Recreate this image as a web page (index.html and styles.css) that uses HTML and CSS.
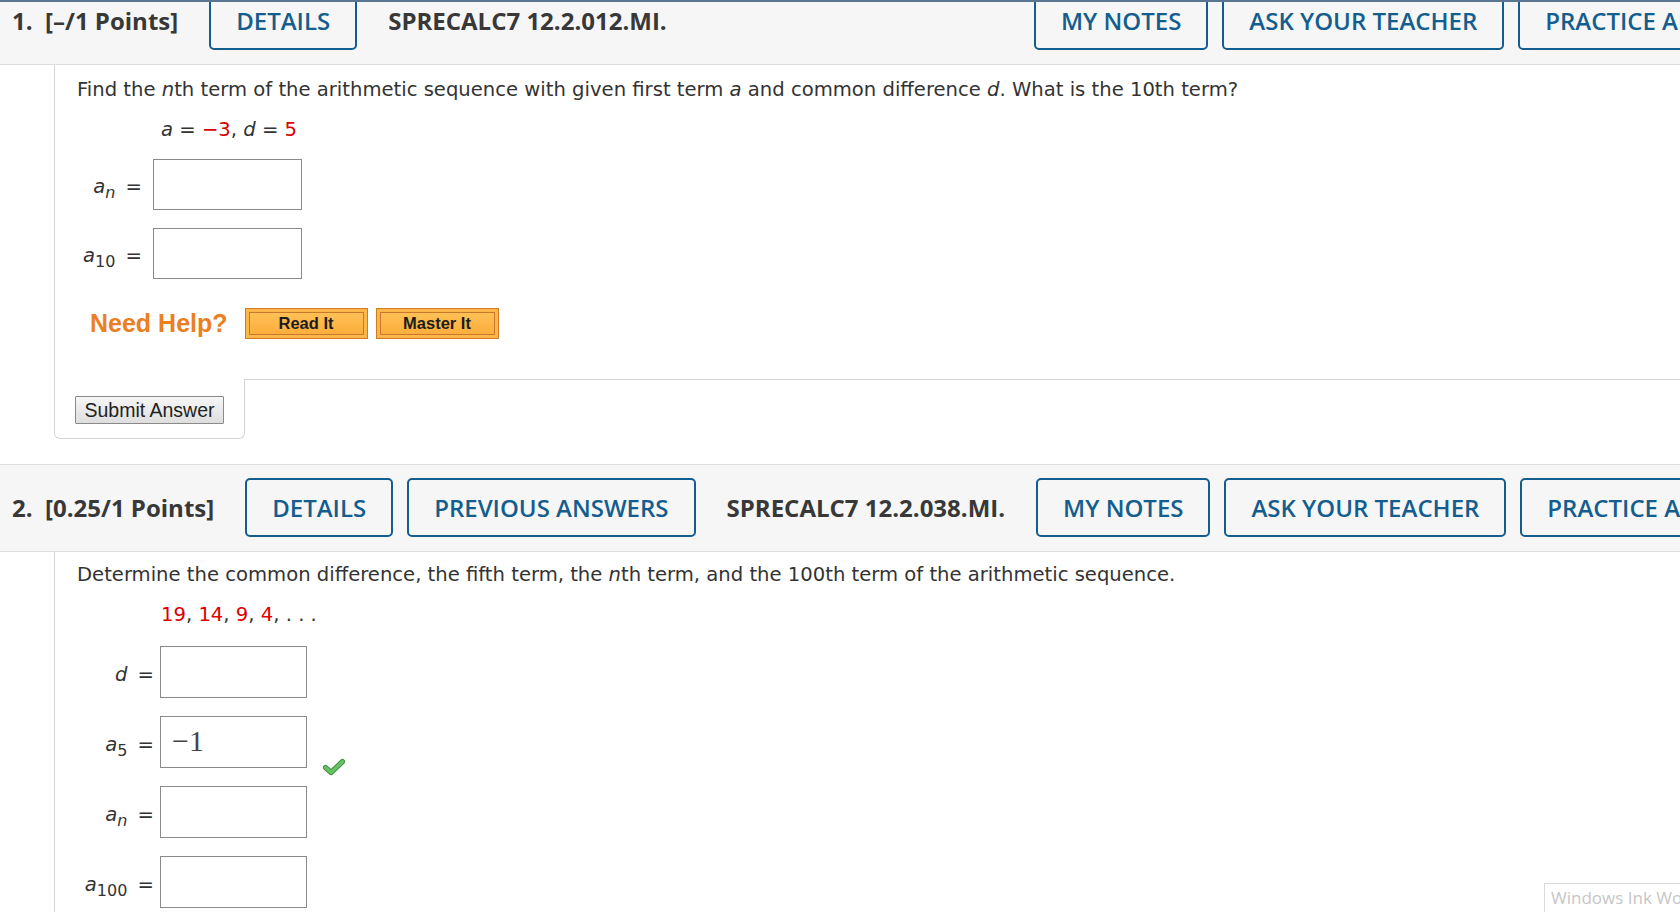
FILE: index.html
```html
<!DOCTYPE html>
<html lang="en">
<head>
<meta charset="utf-8">
<title>WebAssign</title>
<link rel="stylesheet" href="styles.css">
</head>
<body>
<div class="topline"></div>
<div class="page">
  <section class="question">
    <header class="qhead">
      <span class="qnum">1.&nbsp; [–/1 Points]</span>
      <a class="qbtn" href="#">DETAILS</a>
      <span class="qcode">SPRECALC7 12.2.012.MI.</span>
      <div class="qright">
        <a class="qbtn" href="#">MY NOTES</a>
        <a class="qbtn" href="#">ASK YOUR TEACHER</a>
        <a class="qbtn" href="#">PRACTICE ANOTHER</a>
      </div>
    </header>
    <div class="qwrap">
      <div class="qcontent q1">
        <p class="prompt">Find the <i>n</i>th term of the arithmetic sequence with given first term <i>a</i> and common difference <i>d</i>. What is the 10th term?</p>
        <div class="given"><i>a</i> = <span class="red">−3</span>, <i>d</i> = <span class="red">5</span></div>
        <div class="answers q1answers">
          <label class="lbl"><i>a</i><sub><i>n</i></sub> <span class="eq">=</span></label>
          <div class="box"></div>
          <span></span>
          <label class="lbl"><i>a</i><sub>10</sub> <span class="eq">=</span></label>
          <div class="box"></div>
          <span></span>
        </div>
        <div class="help">
          <span class="needhelp">Need Help?</span>
          <a class="helpbtn" href="#">Read It</a>
          <a class="helpbtn" href="#">Master It</a>
        </div>
      </div>
      <div class="qfoot">
        <div class="tab"><button class="submit">Submit Answer</button></div>
        <div class="filler"></div>
      </div>
    </div>
  </section>

  <section class="question second">
    <header class="qhead">
      <span class="qnum">2.&nbsp; [0.25/1 Points]</span>
      <a class="qbtn" href="#">DETAILS</a>
      <a class="qbtn" href="#">PREVIOUS ANSWERS</a>
      <span class="qcode">SPRECALC7 12.2.038.MI.</span>
      <div class="qright">
        <a class="qbtn" href="#">MY NOTES</a>
        <a class="qbtn" href="#">ASK YOUR TEACHER</a>
        <a class="qbtn" href="#">PRACTICE ANOTHER</a>
      </div>
    </header>
    <div class="qwrap">
      <div class="qcontent q2">
        <p class="prompt">Determine the common difference, the fifth term, the <i>n</i>th term, and the 100th term of the arithmetic sequence.</p>
        <div class="given"><span class="red">19</span>, <span class="red">14</span>, <span class="red">9</span>, <span class="red">4</span>, . . .</div>
        <div class="answers q2answers">
          <label class="lbl"><i>d</i> <span class="eq">=</span></label>
          <div class="box"></div>
          <span></span>
          <label class="lbl"><i>a</i><sub>5</sub> <span class="eq">=</span></label>
          <div class="box"><span class="mathval">−1</span></div>
          <span class="check"><svg width="22" height="18" viewBox="0 0 22 18"><path d="M2.5 9.5 L8 14.5 L19.5 3.5" fill="none" stroke="#3f8f3f" stroke-width="5.2" stroke-linecap="round" stroke-linejoin="round"/><path d="M2.5 9.5 L8 14.5 L19.5 3.5" fill="none" stroke="#69c166" stroke-width="3.2" stroke-linecap="round" stroke-linejoin="round"/></svg></span>
          <label class="lbl"><i>a</i><sub><i>n</i></sub> <span class="eq">=</span></label>
          <div class="box"></div>
          <span></span>
          <label class="lbl"><i>a</i><sub>100</sub> <span class="eq">=</span></label>
          <div class="box"></div>
          <span></span>
        </div>
      </div>
    </div>
  </section>
</div>
<div class="inkbox">Windows Ink Workspace</div>
</body>
</html>
```
FILE: styles.css
```css
html, body {
  margin: 0;
  padding: 0;
  background: #ffffff;
  overflow: hidden;
}
body {
  font-family: Verdana, "DejaVu Sans", sans-serif;
  color: #333333;
  width: 1680px;
  height: 912px;
}
.topline {
  position: fixed;
  top: 0;
  left: 0;
  right: 0;
  height: 2px;
  background: #5a7690;
  z-index: 5;
}
.page {
  margin-top: -23px;
}
.qhead {
  display: flex;
  align-items: center;
  gap: 14px;
  box-sizing: border-box;
  width: 1815px;
  height: 88px;
  padding: 0 12px 2px 12px;
  background: #f6f6f6;
  border-top: 1px solid #dddddd;
  border-bottom: 1px solid #dddddd;
  font-family: "Open Sans", "Noto Sans", sans-serif;
  font-size: 24px;
  white-space: nowrap;
}
.qnum {
  font-weight: 700;
  color: #383838;
  margin-right: 17px;
}
.qcode {
  font-weight: 700;
  color: #383838;
  margin: 0 17px;
}
.qbtn {
  display: flex;
  align-items: center;
  box-sizing: border-box;
  height: 59px;
  padding: 0 25px;
  border: 2px solid #135e8e;
  border-radius: 5px;
  color: #135e8e;
  font-weight: 600;
  text-decoration: none;
}
.qright {
  display: flex;
  gap: 14px;
  margin-left: auto;
}
.qwrap {
  margin-left: 54px;
}
.qcontent {
  border-left: 1px solid #d6d6d6;
  padding-left: 22px;
}
.q1 {
  padding-top: 13px;
}
.q2 {
  padding-top: 11px;
}
.prompt {
  margin: 0;
  font-size: 19.6px;
  line-height: 24px;
}
.given {
  margin: 16px 0 0 84px;
  font-size: 19.6px;
  line-height: 24px;
}
.red {
  color: #dd0000;
}
.answers {
  display: grid;
  align-items: center;
  font-size: 19.6px;
}
.q1answers {
  margin: 17px 0 0 -22px;
  grid-template-columns: 87px 149px 1fr;
  grid-auto-rows: 51px;
  row-gap: 18px;
  column-gap: 11px;
}
.q2answers {
  margin: 19px 0 0 -22px;
  grid-template-columns: 99px 147px 1fr;
  grid-auto-rows: 52px;
  row-gap: 18px;
  column-gap: 6px;
}
.lbl {
  text-align: right;
  white-space: nowrap;
  padding-top: 4px;
}
.lbl i {
  font-style: italic;
}
.lbl sub {
  font-size: 16px;
  vertical-align: -5px;
  line-height: 0;
}
.eq {
  margin-left: 4px;
}
.box {
  box-sizing: border-box;
  height: 100%;
  border: 1px solid #8a8a8a;
  background: #ffffff;
  display: flex;
  align-items: center;
  padding-left: 11px;
}
.mathval {
  font-family: "Liberation Serif", "DejaVu Serif", serif;
  font-size: 30px;
  color: #444444;
  line-height: 1;
  margin-top: -2px;
}
.check {
  align-self: end;
  margin-left: 10px;
  margin-bottom: -8px;
  height: 18px;
}
.help {
  display: flex;
  align-items: center;
  margin-top: 29px;
  padding-left: 13px;
  padding-bottom: 40px;
}
.needhelp {
  font-family: "Liberation Sans", Arial, sans-serif;
  font-weight: 700;
  font-size: 25px;
  color: #ec7f1f;
  margin-right: 17px;
}
.helpbtn {
  box-sizing: border-box;
  width: 123px;
  height: 31px;
  margin-right: 8px;
  display: flex;
  align-items: center;
  justify-content: center;
  background: linear-gradient(#ffc45a, #fbaa38);
  border: 1px solid #d27a24;
  box-shadow: inset 0 0 0 3px #fdb648, inset 0 0 0 4px #c8792d;
  font-family: "Liberation Sans", Arial, sans-serif;
  font-weight: 700;
  font-size: 16.5px;
  color: #1c1c1c;
  text-decoration: none;
}
.qfoot {
  display: flex;
}
.tab {
  box-sizing: border-box;
  width: 191px;
  border: 1px solid #d6d6d6;
  border-top: none;
  border-radius: 0 0 6px 6px;
  padding: 17px 0 14px 20px;
}
.filler {
  flex: 1;
  border-top: 1px solid #d6d6d6;
}
.submit {
  display: block;
  box-sizing: border-box;
  width: 149px;
  height: 28px;
  padding: 0;
  border: 1px solid #8a8a8a;
  border-radius: 1px;
  background: linear-gradient(#f6f6f6, #dedede);
  font-family: "Liberation Sans", Arial, sans-serif;
  font-size: 19.5px;
  color: #222222;
}
.second {
  margin-top: 25px;
}
.second .qcontent {
  height: 400px;
}
.inkbox {
  position: fixed;
  left: 1544px;
  top: 883px;
  box-sizing: border-box;
  height: 32px;
  padding: 2px 6px;
  border: 1px solid #dadada;
  background: #ffffff;
  font-family: "Open Sans", "Noto Sans", sans-serif;
  font-size: 17px;
  color: #c6c6c6;
  white-space: nowrap;
}
```
